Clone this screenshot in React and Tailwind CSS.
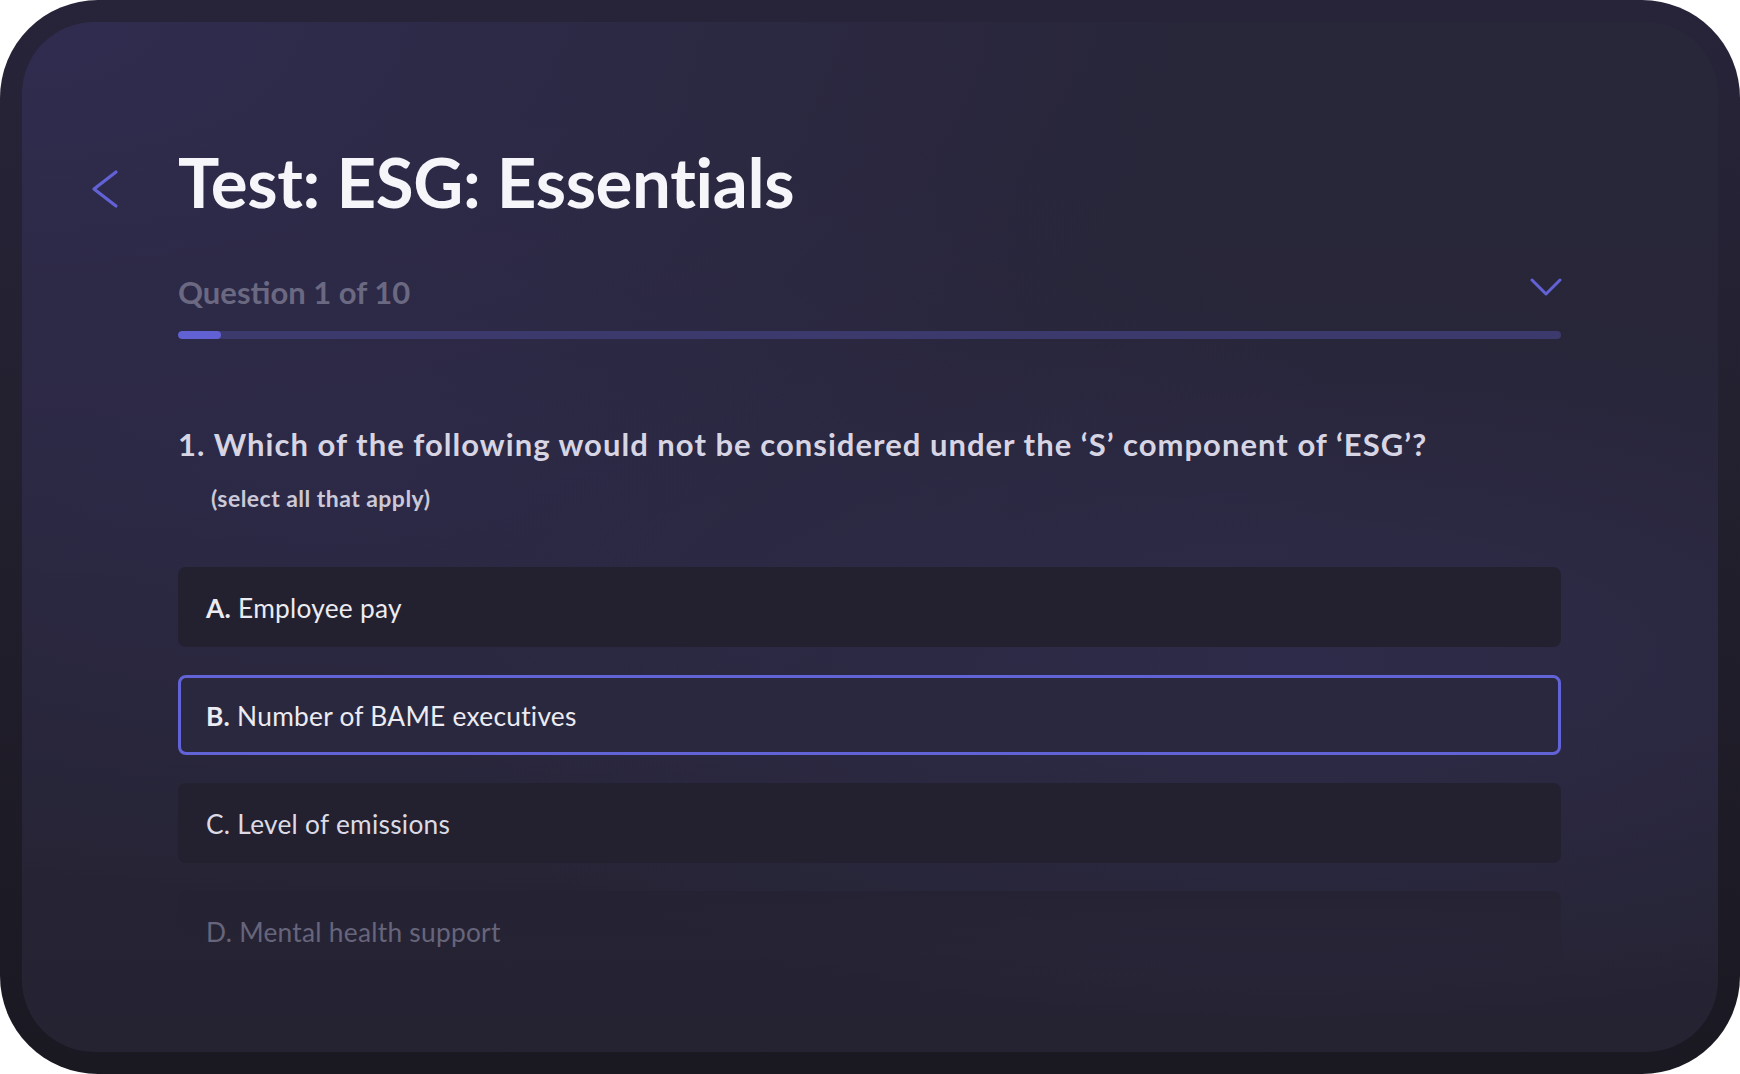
import React from 'react';

const options = [
  { key: 'A', text: 'Employee pay', state: 'idle' },
  { key: 'B', text: 'Number of BAME executives', state: 'selected' },
  { key: 'C', text: 'Level of emissions', state: 'idle' },
  { key: 'D', text: 'Mental health support', state: 'faded' },
];

function BackIcon() {
  return (
    <svg width="28" height="40" viewBox="0 0 28 40" fill="none">
      <path d="M25 3 L3 20 L25 37" stroke="#6262d6" strokeWidth="3.2" strokeLinecap="round" strokeLinejoin="round" />
    </svg>
  );
}

function DownIcon() {
  return (
    <svg width="32" height="20" viewBox="0 0 32 20" fill="none">
      <path d="M2 3 L16 17 L30 3" stroke="#6262d6" strokeWidth="3" strokeLinecap="round" strokeLinejoin="round" />
    </svg>
  );
}

function Option({ letter, text, state }) {
  const box =
    state === 'selected'
      ? 'border-[3px] border-[#6363d8] bg-[#2a283f] px-[25px]'
      : state === 'faded'
      ? 'bg-[linear-gradient(180deg,#252333_0%,rgba(37,35,51,0.25)_100%)] px-[28px]'
      : 'bg-[#232130] px-[28px]';
  const color = state === 'faded' ? 'text-[#67657c]' : letter === 'C' ? 'text-[#dcdbe5]' : 'text-[#ecebf2]';
  return (
    <div className={`h-[80px] rounded-[8px] flex items-center pt-[3px] ${box}`}>
      <span className={`text-[26.3px] leading-none tracking-[0.01em] ${color}`}>
        <span className={letter === 'A' || letter === 'B' ? 'font-bold' : ''}>{letter}.</span> {text}
      </span>
    </div>
  );
}

export default function App() {
  return (
    <div className="w-[1740px] h-[1074px] bg-white" style={{ fontFamily: 'Lato, "Noto Sans", sans-serif' }}>
      <div className="w-full h-full rounded-[98px] p-[22px] bg-[linear-gradient(180deg,#27243a_0%,#221f2d_50%,#1a1821_100%)]">
        <div className="w-full h-full rounded-[72px] overflow-hidden bg-[radial-gradient(70%_55%_at_0%_0%,#302c50_0%,rgba(47,43,78,0)_100%),radial-gradient(55%_35%_at_75%_62%,#2e2b4a_0%,rgba(46,43,74,0)_100%),radial-gradient(60%_40%_at_20%_45%,#2c2946_0%,rgba(44,41,70,0)_100%),linear-gradient(180deg,#282639_0%,#272537_60%,#252332_100%)]">
          <div className="grid grid-cols-[87px_1fr] pl-[69px] pr-[157px] pt-[125px]">
            <div className="pt-[22px]">
              <BackIcon />
            </div>
            <h1 className="text-[69px] leading-none font-bold text-[#f6f5fa] tracking-[-0.005em]">Test: ESG: Essentials</h1>

            <div />
            <div className="mt-[61px]">
              <div className="flex items-center justify-between">
                <span className="text-[31px] leading-none font-bold text-[#6b6881]">Question 1 of 10</span>
                <div className="-mt-[12px] -mr-[1px]">
                  <DownIcon />
                </div>
              </div>
              <div className="mt-[23px] h-[8px] rounded-full bg-[#3c3a6c] overflow-hidden">
                <div className="h-full w-[43px] rounded-full bg-[#6161d4]" />
              </div>

              <p className="mt-[90px] text-[31px] leading-none font-bold tracking-[0.033em] text-[#d7d5e3]">
                1. Which of the following would not be considered under the ‘S’ component of ‘ESG’?
              </p>
              <p className="mt-[27px] ml-[33px] text-[23px] leading-none font-bold tracking-[0.02em] text-[#cbc9d8]">(select all that apply)</p>

              <div className="mt-[57px] flex flex-col gap-[28px]">
                {options.map((o) => (
                  <Option key={o.key} letter={o.key} text={o.text} state={o.state} />
                ))}
              </div>
            </div>
          </div>
        </div>
      </div>
    </div>
  );
}
